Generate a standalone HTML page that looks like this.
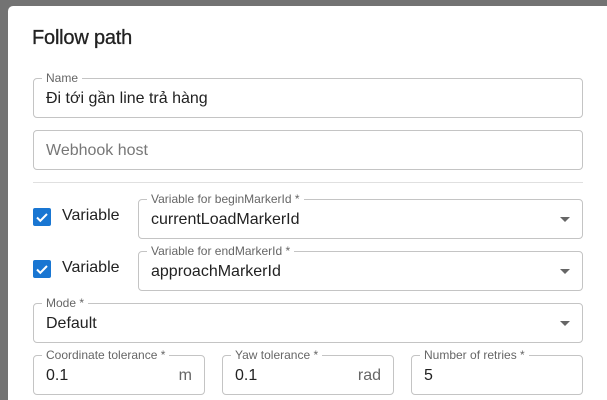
<!DOCTYPE html>
<html style="width:607px;height:400px;overflow:hidden"><head><meta charset="utf-8"><style>
body{margin:0;width:607px;height:400px;background:#737373;overflow:hidden;font-family:"Liberation Sans","Noto Sans CJK SC",sans-serif;position:relative}
.dlg{position:absolute;left:8px;top:6px;width:599px;height:394px;background:#fff;border-radius:5px 0 0 0}
.t{position:absolute;left:32px;top:27px;font-size:20px;font-weight:500;color:#222;letter-spacing:-0.2px;-webkit-text-stroke:0.3px #222}
.f{position:absolute;border:1px solid #c4c4c4;border-radius:4px;box-sizing:border-box;height:40px}
.lb{position:absolute;top:-8px;left:8px;background:#fff;padding:0 4px;font-size:12px;color:#666;line-height:14px;white-space:nowrap}
.v{position:absolute;left:12px;top:11px;font-size:16px;color:#222;white-space:nowrap}
.ph{color:#777}
.ad{position:absolute;right:12px;top:11px;font-size:16px;color:#666}
.ar{position:absolute;right:12px;top:17px;width:0;height:0;border-left:5px solid transparent;border-right:5px solid transparent;border-top:5px solid #666}
.cb{position:absolute;width:18px;height:18px;background:#1976d2;border-radius:2px}
.cl{position:absolute;font-size:16px;color:#222}
.hr{position:absolute;left:33px;width:550px;top:182px;height:1px;background:#e0e0e0}
</style></head><body>
<div class="dlg"></div>
<div class="t">Follow path</div>
<div class="f" style="left:33px;top:78px;width:550px"><span class="lb">Name</span><span class="v">Đi tới gần line trả hàng</span></div>
<div class="f" style="left:33px;top:130px;width:550px"><span class="v ph">Webhook host</span></div>
<div class="hr"></div>
<div class="cb" style="left:33px;top:208px"><svg width="18" height="18"><path d="M4 9.5l3.3 3.3L14 6" stroke="#fff" stroke-width="2" fill="none"/></svg></div>
<div class="cl" style="left:62px;top:207px">Variable</div>
<div class="f" style="left:138px;top:199px;width:445px"><span class="lb">Variable for beginMarkerId *</span><span class="v">currentLoadMarkerId</span><span class="ar"></span></div>
<div class="cb" style="left:33px;top:260px"><svg width="18" height="18"><path d="M4 9.5l3.3 3.3L14 6" stroke="#fff" stroke-width="2" fill="none"/></svg></div>
<div class="cl" style="left:62px;top:259px">Variable</div>
<div class="f" style="left:138px;top:251px;width:445px"><span class="lb">Variable for endMarkerId *</span><span class="v">approachMarkerId</span><span class="ar"></span></div>
<div class="f" style="left:33px;top:303px;width:550px"><span class="lb">Mode *</span><span class="v">Default</span><span class="ar"></span></div>
<div class="f" style="left:33px;top:355px;width:172px"><span class="lb">Coordinate tolerance *</span><span class="v">0.1</span><span class="ad">m</span></div>
<div class="f" style="left:222px;top:355px;width:172px"><span class="lb">Yaw tolerance *</span><span class="v">0.1</span><span class="ad">rad</span></div>
<div class="f" style="left:411px;top:355px;width:172px"><span class="lb">Number of retries *</span><span class="v">5</span></div>
</body></html>
